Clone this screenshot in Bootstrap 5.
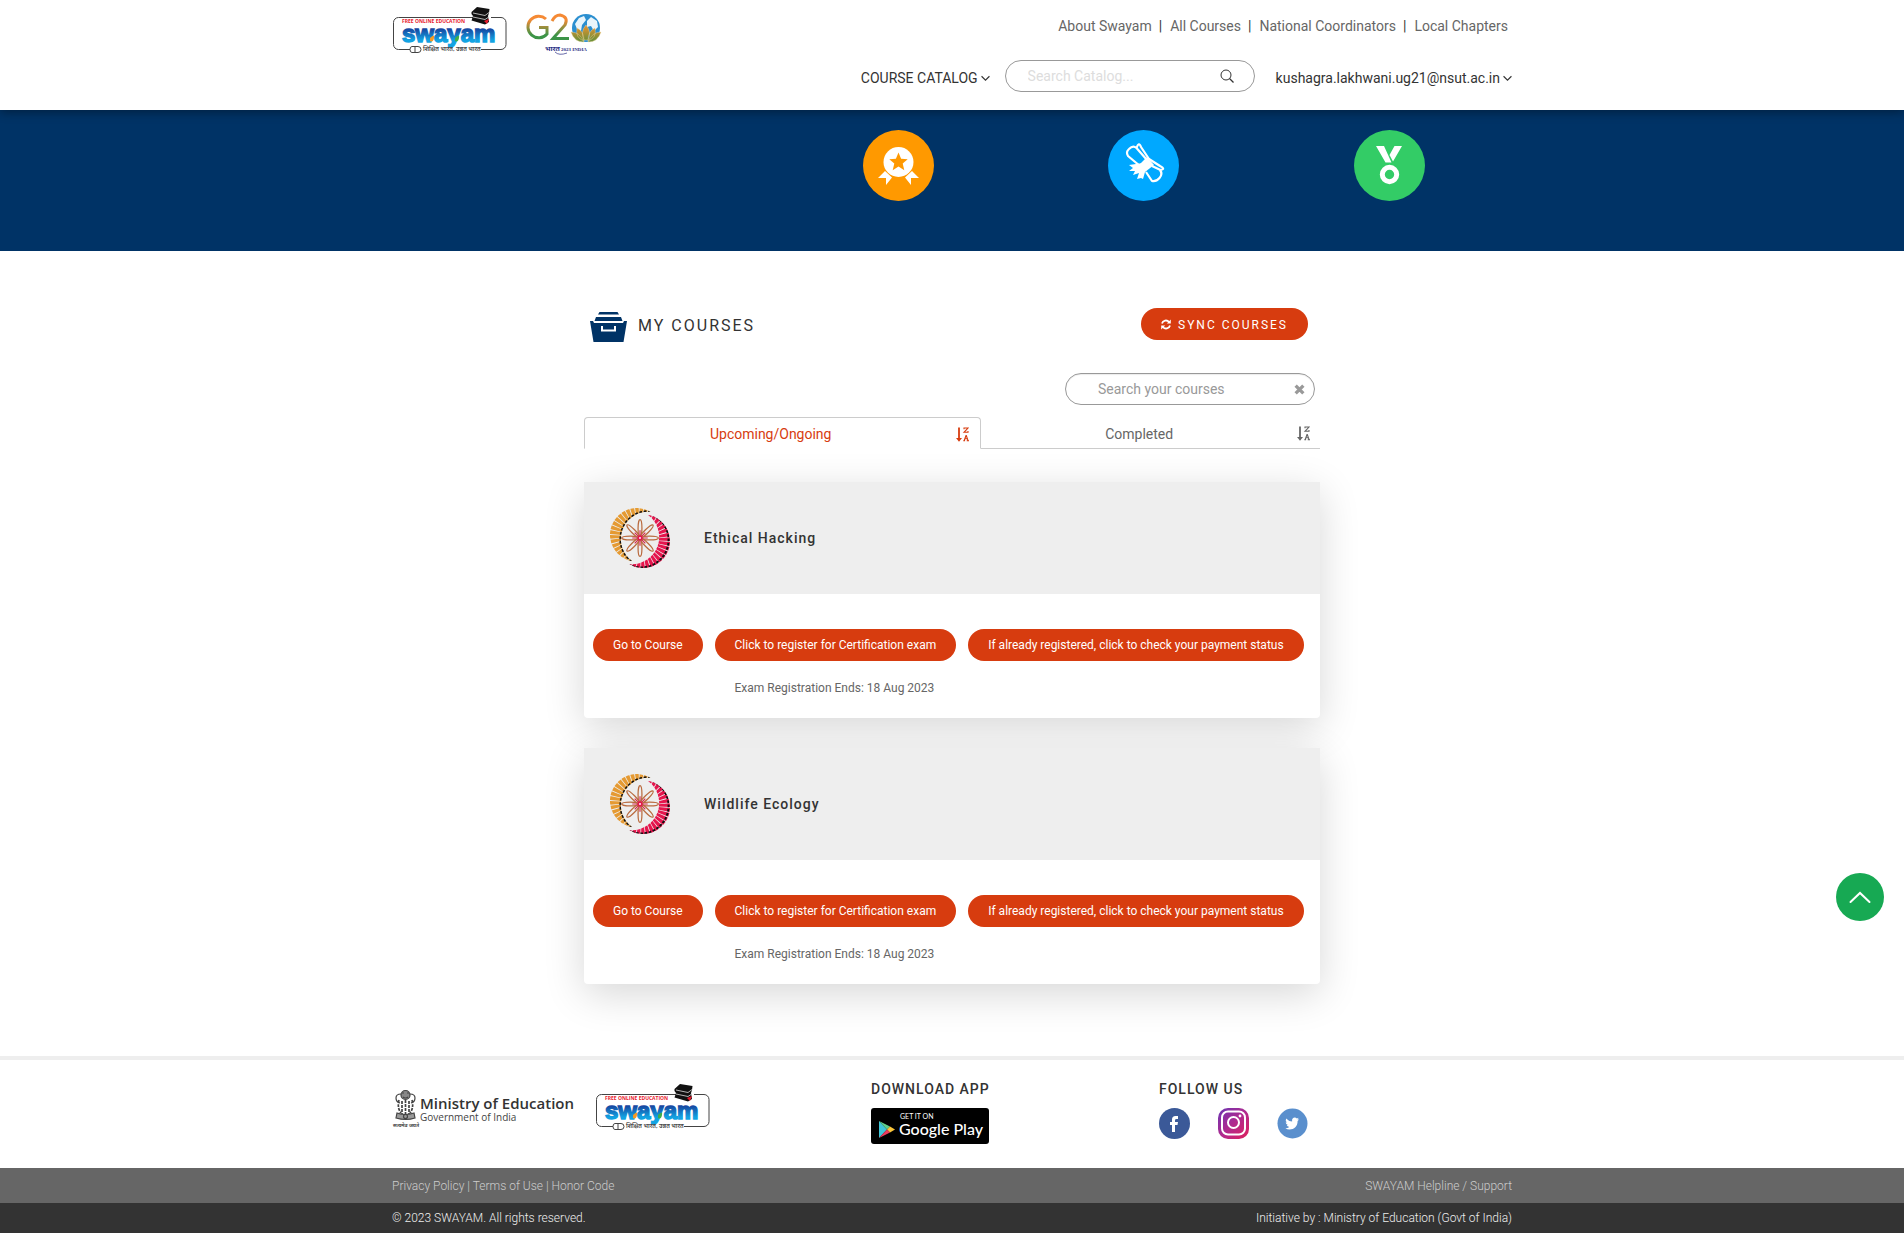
<!DOCTYPE html>
<html lang="en">
<head>
<meta charset="utf-8">
<meta name="viewport" content="width=device-width, initial-scale=1">
<title>SWAYAM - My Courses</title>
<link href="https://cdn.jsdelivr.net/npm/bootstrap@5.3.0/dist/css/bootstrap.min.css" rel="stylesheet">
<style>
  body { font-family: Roboto, "Noto Sans", sans-serif; font-size: 14px; line-height: 20px; color: #333; background: #fff; }
  a { text-decoration: none; color: inherit; }
  svg { display: block; flex: none; }
  .wrap { width: 100%; max-width: 1144px; padding: 0 12px; margin: 0 auto; }
  .site-header { background: #fff; box-shadow: 0 2px 10px rgba(0,0,0,.4); z-index: 2; }
  .logos { padding: 7px 0 0 1px; gap: 18px; }
  .tools { padding: 16px 0 18px; }
  .top-links { color: #666; padding-right: 4px; margin-bottom: 24px; }
  .top-links .bar { color: #333; padding: 0 8px 0 7px; }
  .menu-link { padding-top: 4px; gap: 3px; }
  .pill-box { width: 250px; height: 32px; border: 1px solid #999; border-radius: 16px; background: #fff; }
  .pill-box input { border: 0; outline: 0; background: transparent; min-width: 0; flex: 1; font-size: 14px; line-height: 20px; padding: 0; align-self: stretch; }
  .pill-box button { border: 0; background: none; padding: 0; }
  .catalog-box { margin: 0 21px 0 15px; padding: 0 20px 0 22px; }
  .catalog-box input::placeholder { color: #ddd; opacity: 1; }
  .mine-box { padding: 0 9px 0 32px; margin: 31px 5px 12px auto; box-shadow: inset 0 1px 1px rgba(0,0,0,.08); }
  .mine-box input::placeholder { color: #999; opacity: 1; }
  .band { background: #036; padding: 20px 0 50px; }
  .band-icons, .courses { max-width: 736px; width: 100%; }
  .courses { margin: 0 auto; padding: 57px 0 72px; }
  .heading-row { padding: 0 12px 0 6px; }
  .heading-row h1 { font-size: 16px; line-height: 28px; font-weight: 400; letter-spacing: 2px; margin: 0; }
  .heading-title { gap: 11px; }
  .pill-btn { background: #d73c0f; color: #fff; border: 0; border-radius: 16px; height: 32px; padding: 0 20px; font-size: 12px; line-height: 32px; }
  .pill-btn:hover { background: #b9320b; color: #fff; }
  .sync-btn { letter-spacing: 2px; gap: 7px; padding-top: 1px; }
  .tab-row { margin-bottom: 33px; }
  .tab-item { height: 32px; padding: 2px 10px 0 0; color: #666; border-bottom: 1px solid #ccc; flex: 0 0 46%; }
  .tab-item.on { flex: 0 0 54%; color: #d73c0f; border: 1px solid #ccc; border-bottom-color: transparent; border-radius: 4px 4px 0 0; padding-right: 11px; }
  .course { background: #fff; border-radius: 4px; box-shadow: 0 10px 40px rgba(0,0,0,.16); }
  .course + .course { margin-top: 30px; }
  .course-top { background: #eee; height: 112px; padding: 0 26px; gap: 34px; }
  .course-top h2 { font-size: 14px; font-weight: 500; letter-spacing: 1px; line-height: 20px; margin: 0; }
  .course-body { padding: 35px 9px 20px; gap: 12px; }
  .exam-note { font-size: 12px; color: #666; padding: 17px 20px 0; }
  .foot { border-top: 4px solid #eee; padding: 19px 0 24px; }
  .foot-grid { display: grid; grid-template-columns: 479fr 288fr 353fr; }
  .foot-grid h3 { font-size: 14px; font-weight: 500; letter-spacing: 1px; line-height: 20px; margin: 0 0 9px; }
  .foot-logos { padding-top: 5px; gap: 18px; }
  .social { gap: 28px; }
  .bar-links, .bar-copy { font-size: 12px; font-weight: 300; }
  .bar-links { background: #666; color: #ccc; padding-top: 1px; line-height: 34px; }
  .bar-copy { background: #333; color: #eee; line-height: 30px; }
  .to-top { position: fixed; right: 20px; bottom: 312px; width: 48px; height: 48px; border: 0; padding: 0; border-radius: 50%; background: #17a953; }
</style>
</head>
<body>
<svg width="0" height="0" class="position-absolute" aria-hidden="true">
  <defs>
    <linearGradient id="gSway" x1="0" y1="0" x2="0" y2="1"><stop offset=".3" stop-color="#16409c"/><stop offset=".75" stop-color="#12a3e2"/></linearGradient>
    <linearGradient id="gG20" x1="0" y1="0" x2="0" y2="1"><stop offset=".2" stop-color="#f58a35"/><stop offset=".85" stop-color="#3c9447"/></linearGradient>
    <linearGradient id="gLotus" x1="0" y1="0" x2="0" y2="1"><stop offset="0" stop-color="#f0922e"/><stop offset="1" stop-color="#5f8f3a"/></linearGradient>
    <linearGradient id="gInsta" x1="0" y1="0" x2="1" y2="1"><stop offset="0" stop-color="#6a35b5"/><stop offset=".5" stop-color="#b02a8e"/><stop offset="1" stop-color="#e0205a"/></linearGradient>
    <clipPath id="crescent"><path d="M42 4A27.700 27.700 0 1 0 23 55A28.200 28.200 0 0 1 42 4Z"/></clipPath>
    <symbol id="swayam" viewBox="0 0 114 48">
      <path d="M80 10.500H5.500a5 5 0 0 0-5 5V37.500a5 5 0 0 0 5 5H16M88 42.500h20a5 5 0 0 0 5-5V15.500a5 5 0 0 0-5-5H98" fill="none" stroke="#444"/>
      <text x="9" y="35" font-family="'Liberation Sans Narrow','Liberation Sans',sans-serif" font-weight="700" font-size="24" fill="url(#gSway)" stroke="url(#gSway)" stroke-width="1.500">swayam</text>
      <text x="9" y="16" font-family="'Open Sans',sans-serif" font-weight="700" font-size="5" fill="#e8192c">FREE ONLINE EDUCATION</text>
      <path d="M37 31q5-5 4 0t-4 3z" fill="#f59a23"/><path d="M62 31q5-5 4 0t-4 3z" fill="#3fae49"/>
      <path d="M78.500 5L84 0l12.500 2-.5 4-1 3 1 6-4 2.500-13.500-4 1.500-4.500-1.500-2z" fill="#111"/>
      <path d="M80 6l12 2.500 4-3M80 10l12 2.500 3-2" fill="none" stroke="#ddd" stroke-width=".8"/><path d="M91 14l5-2-2 5z" fill="#e8192c"/>
      <path d="M19 39.500h6a3 3 0 0 1 0 6h-6a2 3 0 0 1 0-6zM22 40v5M12 42.500h5" fill="#fff" stroke="#444"/>
      <text x="30" y="44" font-family="'Noto Sans','Noto Sans Devanagari',sans-serif" font-weight="600" font-size="6" fill="#444">शिक्षित भारत, उन्नत भारत</text>
    </symbol>
    <symbol id="chev" viewBox="0 0 8 6"><path d="M.5 1L4 4.500L7.500 1" fill="none" stroke="#333" stroke-width="1"/></symbol>
    <symbol id="sortza" viewBox="0 0 13 15">
      <path d="M3 .5v11" fill="none" stroke="currentColor" stroke-width="1.800"/><path d="M0 11h6l-3 3.700z" fill="currentColor"/>
      <path d="M8 2.300V1h4L8 5.300h4V4M7.300 13.700h1.800M10.700 13.700h2.300M8.200 13.500L10 8.500h.3L12 13.500M9 11.800h2.500" fill="none" stroke="currentColor" stroke-width="1.100"/>
    </symbol>
    <symbol id="nptel" viewBox="0 0 62 62">
      <g clip-path="url(#crescent)"><circle cx="30" cy="29" r="25" fill="none" stroke="#e59a32" stroke-width="14" stroke-dasharray="3.400 .8"/><path d="M42 4A28.200 28.200 0 0 0 23 55" fill="none" stroke="#111" stroke-width="3" stroke-dasharray="2.800 1.600"/></g>
      <g transform="rotate(180 31 31)" clip-path="url(#crescent)"><circle cx="30" cy="29" r="25" fill="none" stroke="#e5154d" stroke-width="14" stroke-dasharray="3.400 .8"/><circle cx="30" cy="29" r="28.500" fill="none" stroke="#111" stroke-width="2" stroke-dasharray="2.800 1.600"/></g>
      <g fill="none" stroke="#b96a3e" stroke-width="1.300">
        <g id="petals"><ellipse cx="31" cy="21" rx="2" ry="9"/><ellipse cx="31" cy="41" rx="2" ry="9"/><ellipse cx="21" cy="31" rx="9" ry="2"/><ellipse cx="41" cy="31" rx="9" ry="2"/></g>
        <use href="#petals" transform="rotate(45 31 31)"/>
      </g>
      <path d="M31 23v16M23 31h16M25.500 25.500l11 11M36.500 25.500l-11 11" stroke="#d4264f" stroke-width="1.200"/>
      <circle cx="31" cy="31" r="2.500" fill="#e5154d"/><circle cx="31" cy="31" r="1" fill="#fff"/>
    </symbol>
  </defs>
</svg>

<header class="site-header position-relative">
  <div class="wrap d-flex justify-content-between align-items-start">
    <div class="logos d-flex">
      <a href="#" aria-label="Swayam"><svg width="114" height="48"><use href="#swayam"/></svg></a>
      <a href="#" aria-label="G20"><svg width="78" height="50" viewBox="0 0 78 50">
        <circle cx="61" cy="21" r="14" fill="#2b8fd0"/><path d="M50 17l4-6 5-2 2 4-4 5-1 6-4-2zM62 14l4-4 6 4 1 6-4 4-3-5-4 1z" fill="#e9f5fb"/>
        <path d="M21 12A10.800 10.800 0 1 0 22 27V20.500H14M27 14q3-6 8-6 9 2 5 10L28 31.500h16" fill="none" stroke="url(#gG20)" stroke-width="3"/>
        <path d="M61 18q6 7 2 15h-4q-4-8 2-15zM52 21q7 3 7 13-9-3-7-13zM70 21q-7 3-7 13 9-3 7-13zM46 25q9 0 13 10-10 0-13-10zM76 25q-9 0-13 10 10 0 13-10z" fill="url(#gLotus)" stroke="#fbd9a0" stroke-width=".4"/>
        <text x="20" y="44" font-family="'Noto Sans','Noto Sans Devanagari',sans-serif" font-weight="700" font-size="7" fill="#2b2f86">भारत</text>
        <text x="36" y="44" font-family="'Liberation Serif',serif" font-size="5" font-weight="700" fill="#2b2f86">2023 INDIA</text>
        <path d="M30 45q4 4 12 1" fill="none" stroke="#2b2f86" stroke-width=".7"/>
      </svg></a>
    </div>
    <div class="tools">
      <nav class="top-links d-flex justify-content-end"><a href="#">About Swayam</a><span class="bar">|</span><a href="#">All Courses</a><span class="bar">|</span><a href="#">National Coordinators</a><span class="bar">|</span><a href="#">Local Chapters</a></nav>
      <div class="d-flex align-items-center">
        <a href="#" class="menu-link d-flex align-items-center">COURSE CATALOG <svg width="9" height="7"><use href="#chev"/></svg></a>
        <form class="pill-box catalog-box d-flex align-items-center">
          <label for="catalog" class="visually-hidden">Search Catalog</label>
          <input id="catalog" type="text" placeholder="Search Catalog...">
          <button type="button" aria-label="Search"><svg width="14" height="14" viewBox="0 0 14 14"><circle cx="6" cy="6" r="5" fill="none" stroke="#333" stroke-width="1"/><path d="M9.500 9.500L13.500 13.500" stroke="#333" stroke-width="1.200"/></svg></button>
        </form>
        <a href="#" class="menu-link d-flex align-items-center">kushagra.lakhwani.ug21@nsut.ac.in <svg width="9" height="7"><use href="#chev"/></svg></a>
      </div>
    </div>
  </div>
</header>

<div class="band">
  <div class="wrap">
    <div class="band-icons ms-auto d-flex">
      <div class="flex-fill d-flex justify-content-center"><svg width="71" height="71"><circle cx="35.500" cy="35.500" r="35.500" fill="#f90"/><circle cx="35.500" cy="32" r="15" fill="#fff"/><path d="M35.500 22.500l2.600 6.300 6.600.5-5 4.300 1.600 6.600-5.800-3.600-5.800 3.600 1.600-6.600-5-4.300 6.600-.5z" fill="#f90"/><path d="M15 48l7-7 7 6.500-6 7.500v-7zM56 48l-7-7-7 6.500 6 7.500v-7z" fill="#fff"/></svg></div>
      <div class="flex-fill d-flex justify-content-center"><svg width="71" height="71"><circle cx="35.500" cy="35.500" r="35.500" fill="#00a8ff"/><g fill="none" stroke="#fff" stroke-width="2.200" stroke-linejoin="round"><path d="M32 36L20 26Q17.500 22 21 19 25 15 28.500 18L39 30M38 42L44 51Q48 52 51.500 48 55 44 52 40"/><path d="M28.500 18Q31 11 33 17L41 29 52 36Q58 39 52.500 40L44 36"/></g><path d="M39 27L46 35 37 42 31 38 32 34z" fill="#fff"/><path d="M35 33L21 35l4 3-4 3 6 0-2 4 6-2-2 6 4-1 2 1 4-14z" fill="#fff"/></svg></div>
      <div class="flex-fill d-flex justify-content-center"><svg width="71" height="71"><circle cx="35.500" cy="35.500" r="35.500" fill="#3c6"/><path d="M22 16h8l7.500 16.500h-6zM48 16h-7.500l-5 9 3.500 6.500z" fill="#fff"/><circle cx="35.500" cy="44.500" r="7.200" fill="none" stroke="#fff" stroke-width="5"/></svg></div>
    </div>
  </div>
</div>

<main class="courses">
  <div class="heading-row d-flex justify-content-between align-items-start">
    <div class="heading-title d-flex align-items-start pt-1">
      <svg width="37" height="30" viewBox="0 0 37 30"><path d="M9.500 0h18l1.500 2.500H8zM6 5h25l1.500 4h-28zM0 9h3l1 2h29l1-2h3l-3.500 21h-30z" fill="#036"/><path d="M12 14v4.500h13V14" fill="none" stroke="#fff" stroke-width="2"/></svg>
      <h1>MY COURSES</h1>
    </div>
    <button type="button" class="pill-btn sync-btn d-flex align-items-center"><svg width="10" height="11" viewBox="0 0 10 11" fill="none" stroke="#fff" stroke-width="1.800"><path d="M1 4.500A4 4 0 0 1 8 3M9 6.500A4 4 0 0 1 2 8"/><path d="M9.800.5v4h-4zM.2 10.500v-4h4z" fill="#fff" stroke="none"/></svg><span>SYNC COURSES</span></button>
  </div>
  <form class="pill-box mine-box d-flex align-items-center">
    <label for="mine" class="visually-hidden">Search your courses</label>
    <input id="mine" type="text" placeholder="Search your courses">
    <button type="button" aria-label="Clear"><svg width="11" height="11" viewBox="0 0 10 10"><path d="M1.500 1.500l7 7M8.500 1.500l-7 7" stroke="#999" stroke-width="3"/></svg></button>
  </form>
  <nav class="tab-row d-flex">
    <a href="#" class="tab-item on d-flex align-items-center"><span class="flex-fill text-center">Upcoming/Ongoing</span><svg width="13" height="15"><use href="#sortza"/></svg></a>
    <a href="#" class="tab-item d-flex align-items-center"><span class="flex-fill text-center">Completed</span><svg width="13" height="15"><use href="#sortza"/></svg></a>
  </nav>

  <article class="course">
    <div class="course-top d-flex align-items-center"><svg width="60" height="60"><use href="#nptel"/></svg><h2>Ethical Hacking</h2></div>
    <div class="course-body d-flex align-items-start">
      <button type="button" class="pill-btn">Go to Course</button>
      <div><button type="button" class="pill-btn">Click to register for Certification exam</button><div class="exam-note">Exam Registration Ends: 18 Aug 2023</div></div>
      <button type="button" class="pill-btn">If already registered, click to check your payment status</button>
    </div>
  </article>
  <article class="course">
    <div class="course-top d-flex align-items-center"><svg width="60" height="60"><use href="#nptel"/></svg><h2>Wildlife Ecology</h2></div>
    <div class="course-body d-flex align-items-start">
      <button type="button" class="pill-btn">Go to Course</button>
      <div><button type="button" class="pill-btn">Click to register for Certification exam</button><div class="exam-note">Exam Registration Ends: 18 Aug 2023</div></div>
      <button type="button" class="pill-btn">If already registered, click to check your payment status</button>
    </div>
  </article>
</main>

<footer>
  <div class="foot">
    <div class="wrap foot-grid">
      <div class="foot-logos d-flex align-items-start">
        <svg width="186" height="48" viewBox="0 0 186 48" role="img" aria-label="Ministry of Education">
          <g fill="none" stroke="#444" stroke-width="1.200"><path d="M9 10q-5 0-5 4 0 4 4 5M18 10q5 0 5 4 0 4-4 5"/><circle cx="13.500" cy="11" r="4.500" fill="#888"/><path d="M10 9h2m3 0h2M11 13q2.500 2 5 0"/><path d="M7 16q-2 8 2 13M20 16q2 8-2 13M10 17v13M13.500 16v15M17 17v13" stroke-width="1.700" stroke-dasharray="3 1"/><path d="M5 29q8 3 17 0l1 5q-9 3-19 0z" fill="#999"/><circle cx="13.500" cy="32.500" r="2"/></g>
          <text x="1" y="43" font-family="'Noto Sans','Noto Sans Devanagari',sans-serif" font-size="5" font-weight="700" fill="#444">सत्यमेव जयते</text>
          <text x="28" y="25" font-family="'Open Sans',sans-serif" font-size="15" font-weight="600" fill="#333">Ministry of Education</text>
          <text x="28" y="37" font-family="'Open Sans',sans-serif" font-size="10" fill="#444">Government of India</text>
        </svg>
        <svg width="114" height="48"><use href="#swayam"/></svg>
      </div>
      <div>
        <h3>DOWNLOAD APP</h3>
        <a href="#" aria-label="Get it on Google Play"><svg width="118" height="36"><rect width="118" height="36" rx="3" fill="#000"/><path d="M8 13v17l8-8.500z" fill="#3fc6d8"/><path d="M8 13l8 8.500 3-3z" fill="#5fd08a"/><path d="M19 18.500l5 3-5 3-3-3z" fill="#fbc53a"/><path d="M8 30l8-8.500 3 3z" fill="#ec3a5b"/>
          <text x="29" y="11" font-family="Lato,sans-serif" font-size="7" fill="#fff">GET IT ON</text><text x="28" y="27" font-family="Lato,sans-serif" font-size="16" font-weight="500" fill="#fff">Google Play</text></svg></a>
      </div>
      <div>
        <h3>FOLLOW US</h3>
        <div class="social d-flex">
          <a href="#" aria-label="Facebook"><svg width="31" height="31"><circle cx="15.500" cy="15.500" r="15.500" fill="#3b5998"/><path d="M13 24v-7h-2v-3h2v-2.500q0-3.500 3.500-3.500h2.500v3h-1.500q-1.500 0-1.500 1.200V14h3l-.5 3H16v7z" fill="#fff"/></svg></a>
          <a href="#" aria-label="Instagram"><svg width="31" height="31"><rect width="31" height="31" rx="10" fill="url(#gInsta)"/><g fill="none" stroke="#fff"><rect x="4" y="3.500" width="23" height="23" rx="6" stroke-width="2"/><circle cx="15.500" cy="14.500" r="5.500" stroke-width="2"/></g><circle cx="22" cy="8" r="1.400" fill="#fff"/></svg></a>
          <a href="#" aria-label="Twitter"><svg width="31" height="31"><circle cx="15.500" cy="15.500" r="15" fill="#5a8fcd"/><path d="M22 11.500q-.6.900-1.400 1.500c.2 5-3.600 8.500-8 8.500q-2.400 0-4.200-1.200 2.300 0 3.900-1.200-2-.3-2.600-2h1.200q-2-.7-2.200-2.900l1.300.3q-2-1.700-.9-4 2.500 2.800 6 3c-.6-4.300 3.200-4.600 4.800-3l1.800-.7-1.200 1.800z" fill="#fff"/></svg></a>
        </div>
      </div>
    </div>
  </div>
  <div class="bar-links"><div class="wrap d-flex justify-content-between"><div><a href="#">Privacy Policy</a> | <a href="#">Terms of Use</a> | <a href="#">Honor Code</a></div><a href="#">SWAYAM Helpline / Support</a></div></div>
  <div class="bar-copy"><div class="wrap d-flex justify-content-between"><span>© 2023 SWAYAM. All rights reserved.</span><span>Initiative by : Ministry of Education (Govt of India)</span></div></div>
</footer>
<button type="button" class="to-top" aria-label="Back to top"><svg width="48" height="48"><path d="M14.500 29L24 20L33.500 29" fill="none" stroke="#fff" stroke-width="2" stroke-linecap="round"/></svg></button>
<script src="https://cdn.jsdelivr.net/npm/bootstrap@5.3.0/dist/js/bootstrap.bundle.min.js"></script>
</body>
</html>
